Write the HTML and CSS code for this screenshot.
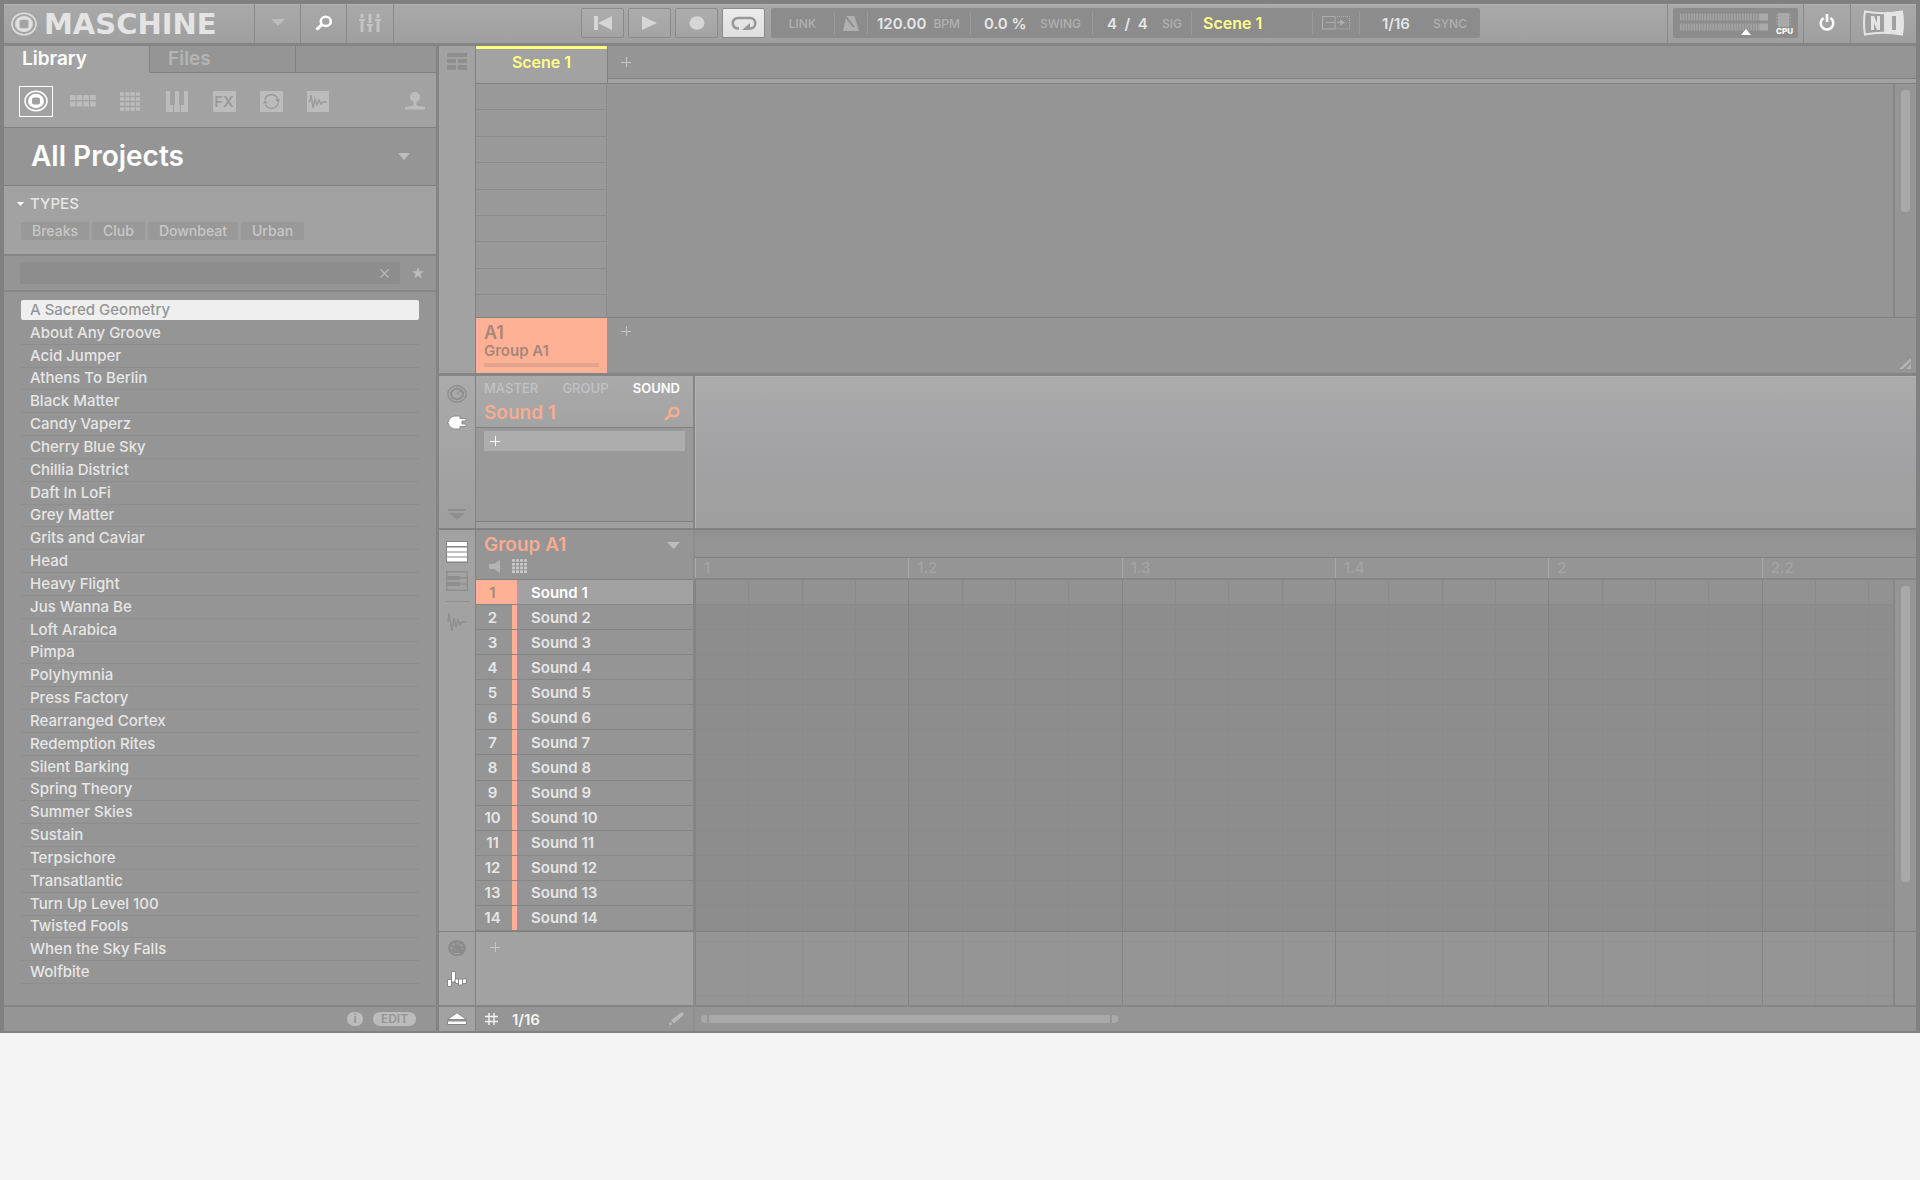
FILE: index.html
```
<!DOCTYPE html>
<html lang="en">

<head>
  <meta charset="utf-8">
  <title>Maschine</title>
  <link rel="stylesheet" href="styles.css">
</head>

<body>
  <div class="app">
    <header class="header">
      <div class="brand">
        <svg width="26" height="24" viewBox="0 0 26 24">
          <ellipse cx="13" cy="12" rx="12" ry="10.8" fill="none" stroke="#dedede" stroke-width="1.6" />
          <ellipse cx="13" cy="12" rx="9" ry="8" fill="#dedede" />
          <rect x="8.500" y="7.800" width="9" height="8.400" rx="2" fill="#a4a4a4" />
        </svg>
        <span>MASCHINE</span>
      </div>
      <button class="head-btn" aria-label="Menu">
        <svg width="14" height="7" viewBox="0 0 14 7"><path d="M0 0h14L7 7z" fill="#bdbdbd" /></svg>
      </button>
      <button class="head-btn" aria-label="Browser">
        <svg width="18" height="16" viewBox="0 0 18 16" fill="none" stroke="#fff">
          <ellipse cx="10.8" cy="6.4" rx="5" ry="4.6" stroke-width="2.6" />
          <path d="M7.2 9.4L1.5 14.6" stroke-width="3" />
        </svg>
      </button>
      <button class="head-btn" aria-label="Mixer">
        <svg width="22" height="18" viewBox="0 0 22 18" fill="#c4c4c4">
          <path d="M1.5 0h3v4h-3zM0 5h6v2H4.500v11h-3V7H0zM9.500 0h3v9h-3zM8 10h6v2h-1.500v6h-3v-6H8zM17.500 0h3v4h-3zM16 5h6v2h-1.500v11h-3V7H16z" />
        </svg>
      </button>

      <div class="transport">
        <button class="play-btn" aria-label="Restart">
          <svg width="18" height="14" viewBox="0 0 18 14"><path d="M0 0h4v14H0zM18 0v14L4 7z" fill="#d6d6d6" /></svg>
        </button>
        <button class="play-btn" aria-label="Play">
          <svg width="15" height="14" viewBox="0 0 15 14"><path d="M0 0l15 7-15 7z" fill="#d6d6d6" /></svg>
        </button>
        <button class="play-btn" aria-label="Record">
          <svg width="16" height="14" viewBox="0 0 16 14"><ellipse cx="8" cy="7" rx="7.500" ry="6.800" fill="#d6d6d6" /></svg>
        </button>
        <button class="play-btn on" aria-label="Loop">
          <svg width="26" height="15" viewBox="0 0 26 15">
            <path d="M8 12.500H7a5.200 5.200 0 0 1 0-10.500h12a5.200 5.200 0 0 1 0 10.500h-2" fill="none" stroke="#999" stroke-width="2.600" />
            <path d="M11 14l8-7v7z" fill="#999" />
          </svg>
        </button>
        <div class="display">
          <div class="cell link"><small>LINK</small></div>
          <div class="cell metro">
            <svg width="16" height="15" viewBox="0 0 16 15">
              <path d="M3.500 0h8L16 15H0z" fill="#b0b0b0" />
              <path d="M3 1l8 10" stroke="#8c8c8c" stroke-width="2" />
              <path d="M4.500 0L11 9" stroke="#b0b0b0" />
            </svg>
          </div>
          <div class="cell bpm"><b>120.00</b><small>BPM</small></div>
          <div class="cell swing"><b>0.0 %</b><small>SWING</small></div>
          <div class="cell sig"><b>4&nbsp; /&nbsp; 4</b><small>SIG</small></div>
          <div class="cell scene-name"><b>Scene 1</b></div>
          <div class="cell follow">
            <svg width="28" height="14" viewBox="0 0 28 14" fill="none" stroke="#aeaeae">
              <path d="M13 .5H.5v12.500H13V.5M4 6.500h8M15 6.500h3" />
              <path d="M15 .5h12.500v12.500H13" stroke-dasharray="1 1" />
              <path d="M18 3.500l5 3-5 3z" fill="#aeaeae" stroke="none" />
            </svg>
          </div>
          <div class="cell sync"><b>1/16</b><small>SYNC</small></div>
        </div>
      </div>

      <div class="meter-box">
        <div class="meter">
          <svg width="112" height="24" viewBox="0 0 112 24">
            <path d="M0 4h80M0 14h80" stroke="#a4a4a4" stroke-width="7" stroke-dasharray="1.700 1" />
            <path d="M80 .5h8v7h-8zM80 10.500h8v7h-8zM98 0h11v14H98z" fill="#a9a9a9" />
            <path d="M96 2h15M96 5h15M96 8h15M96 11h15" stroke="#a9a9a9" />
            <path d="M61 22l5-6 5 6z" fill="#fff" />
          </svg>
          <span>CPU</span>
        </div>
      </div>
      <button class="head-btn power" aria-label="Power">
        <svg width="18" height="18" viewBox="0 0 18 18" fill="none" stroke="#fff" stroke-width="2.600">
          <path d="M5.500 4A6.300 6.300 0 1 0 12.500 4M9 0v8" />
        </svg>
      </button>
      <button class="head-btn ni" aria-label="Native Instruments">
        <svg width="42" height="26" viewBox="0 0 42 26">
          <path d="M2 1.500Q20 5 39 1.500Q41 13 39 24.500Q20 21 2 24.500Q0 13 2 1.500z" fill="#a0a0a0" stroke="#e4e4e4" stroke-width="2" />
          <path d="M21 3.500Q30 3.500 39 1.500Q41 13 39 24.500Q30 22.500 21 22.500z" fill="#e4e4e4" />
          <path d="M8 20V6h3l3 7V6h3v14h-3l-3-7v7z" fill="#e4e4e4" />
          <path d="M29 6h4v14h-4z" fill="#a0a0a0" />
        </svg>
      </button>
    </header>

    <div class="workspace">
      <!-- Browser -->
      <aside class="browser">
        <nav class="tabs">
          <button class="tab active">Library</button>
          <button class="tab">Files</button>
        </nav>
        <div class="kinds">
          <button class="kind active" aria-label="Projects">
            <svg width="24" height="22" viewBox="0 0 24 22">
              <ellipse cx="12" cy="11" rx="11" ry="9.800" fill="none" stroke="#fff" stroke-width="1.500" />
              <ellipse cx="12" cy="11" rx="8" ry="7.200" fill="#fff" />
              <rect x="8" y="7.500" width="8" height="7" rx="2" fill="#a2a2a2" />
            </svg>
          </button>
          <button class="kind" aria-label="Groups">
            <svg width="26" height="12" viewBox="0 0 26 12" fill="none" stroke="#bcbcbc" stroke-width="5">
              <path d="M0 2.500h26M0 9h26" stroke-dasharray="5.600 1.100" />
            </svg>
          </button>
          <button class="kind" aria-label="Sounds">
            <svg width="20" height="19" viewBox="0 0 20 19" fill="none" stroke="#bcbcbc" stroke-width="3.700">
              <path d="M0 2h20M0 7h20M0 12h20M0 17h20" stroke-dasharray="4.200 1.100" />
            </svg>
          </button>
          <button class="kind" aria-label="Instruments">
            <svg width="22" height="21" viewBox="0 0 22 21" fill="#bcbcbc">
              <path d="M0 0h4v14h3v7H0zM8 14h1V0h4v14h1v7H8zM18 0h4v21h-7v-7h3z" />
            </svg>
          </button>
          <button class="kind" aria-label="Effects">
            <span class="fx">FX</span>
          </button>
          <button class="kind" aria-label="Loops">
            <svg width="23" height="21" viewBox="0 0 23 21" fill="none" stroke="#9a9a9a" stroke-width="1.400">
              <path d="M0 0h23v21H0z" fill="#bcbcbc" stroke="none" />
              <path d="M5 9a6.500 6 0 0 1 12.500-1.500M18 12a6.500 6 0 0 1-12.500 1.500" />
              <path d="M15 8h5l-1.500 4zM8 12.500H3L5 9z" fill="#9a9a9a" stroke="none" />
            </svg>
          </button>
          <button class="kind" aria-label="One-shots">
            <svg width="22" height="21" viewBox="0 0 22 21" fill="none" stroke="#9a9a9a" stroke-width="1.400">
              <path d="M0 0h22v21H0z" fill="#bcbcbc" stroke="none" />
              <path d="M2 11l1-1 1-6 2 13 2-9 2 6 2-5 2 4 2-2h4" />
            </svg>
          </button>
          <button class="kind user" aria-label="User content">
            <svg width="20" height="18" viewBox="0 0 20 18" fill="#bcbcbc">
              <ellipse cx="10" cy="5" rx="5" ry="5" />
              <path d="M8.500 9h3v4.500l8.500 1.500v2.500H0V15l8.500-1.500z" />
            </svg>
          </button>
        </div>
        <button class="project">
          <span>All Projects</span>
          <svg width="12" height="7" viewBox="0 0 12 7"><path d="M0 0h12L6 7z" fill="#bdbdbd" /></svg>
        </button>
        <section class="types">
          <h2><svg width="7" height="4" viewBox="0 0 7 4"><path d="M0 0h7L3.500 4z" fill="#fff" /></svg>TYPES</h2>
          <div class="tags">
            <button>Breaks</button>
            <button>Club</button>
            <button>Downbeat</button>
            <button>Urban</button>
          </div>
        </section>
        <div class="search">
          <div class="search-box">
            <input type="text" aria-label="Search">
            <button aria-label="Clear search">
              <svg width="9" height="9" viewBox="0 0 9 9"><path d="M.5.5l8 8M8.500.5l-8 8" stroke="#b8b8b8" stroke-width="1.300" /></svg>
            </button>
          </div>
          <button aria-label="Favorites">
            <svg width="12" height="12" viewBox="0 0 12 12"><path d="M6 0l1.400 4.200H12L8.300 7l1.400 4.600L6 8.800l-3.700 2.800L3.700 7 0 4.200h4.600z" fill="#bdbdbd" /></svg>
          </button>
        </div>
        <ul class="results">
          <li class="selected">A Sacred Geometry</li>
          <li>About Any Groove</li>
          <li>Acid Jumper</li>
          <li>Athens To Berlin</li>
          <li>Black Matter</li>
          <li>Candy Vaperz</li>
          <li>Cherry Blue Sky</li>
          <li>Chillia District</li>
          <li>Daft In LoFi</li>
          <li>Grey Matter</li>
          <li>Grits and Caviar</li>
          <li>Head</li>
          <li>Heavy Flight</li>
          <li>Jus Wanna Be</li>
          <li>Loft Arabica</li>
          <li>Pimpa</li>
          <li>Polyhymnia</li>
          <li>Press Factory</li>
          <li>Rearranged Cortex</li>
          <li>Redemption Rites</li>
          <li>Silent Barking</li>
          <li>Spring Theory</li>
          <li>Summer Skies</li>
          <li>Sustain</li>
          <li>Terpsichore</li>
          <li>Transatlantic</li>
          <li>Turn Up Level 100</li>
          <li>Twisted Fools</li>
          <li>When the Sky Falls</li>
          <li>Wolfbite</li>
        </ul>
        <footer class="browser-foot">
          <button class="info">i</button>
          <button class="edit">EDIT</button>
        </footer>
      </aside>

      <main class="main">
        <!-- Arranger -->
        <section class="arranger">
          <div class="rail">
            <button aria-label="Arranger view">
              <svg width="20" height="17" viewBox="0 0 20 17" fill="#8e8e8e"><path d="M0 0h20v4H0zM0 6h9v4H0zM11 6h9v4h-9zM0 12h9v5H0zM11 12h9v5h-9z" /></svg>
            </button>
          </div>
          <button class="scene-tab">Scene 1</button>
          <div class="scene-bar"><button class="plus" aria-label="Add scene"></button></div>
          <div class="clips">
            <div></div><div></div><div></div><div></div><div></div><div></div><div></div><div></div><div></div>
          </div>
          <div class="canvas"></div>
          <div class="vscroll"><span class="short"></span></div>
          <button class="group">
            <b>A1</b>
            <span>Group A1</span>
            <i></i>
          </button>
          <div class="group-bar">
            <button class="plus" aria-label="Add group"></button>
            <svg width="13" height="11" viewBox="0 0 13 11"><path d="M12 0v3L4 11H0zM12 6v5H7z" fill="#b4b4b4" /></svg>
          </div>
        </section>

        <!-- Control area -->
        <section class="control">
          <div class="rail">
            <button aria-label="Channel">
              <svg width="20" height="18" viewBox="0 0 20 18" fill="none" stroke="#8e8e8e">
                <ellipse cx="10" cy="9" rx="9.200" ry="8.200" stroke-width="1.400" />
                <ellipse cx="10" cy="9" rx="6" ry="5.300" stroke-width="2" />
                <path d="M10 9l4-4" stroke-width="1.500" />
              </svg>
            </button>
            <button aria-label="Plug-in">
              <svg width="20" height="15" viewBox="0 0 20 15"><path d="M.5 7h1C2 3 5 1 9 1h4v2.500h6v2.500h-4v3h4v2.500h-6V14H9C5 14 2 12 1.500 8.500h-1z" fill="#fff" stroke="#8b8b8b" /></svg>
            </button>
            <button class="last" aria-label="Collapse">
              <svg width="18" height="11" viewBox="0 0 18 11" fill="#8e8e8e"><path d="M0 0h18v2H0zM1 4h16l-8 7z" /></svg>
            </button>
          </div>
          <div class="plugin">
            <div class="plugin-head">
              <div class="levels">
                <button>MASTER</button>
                <button>GROUP</button>
                <button class="active">SOUND</button>
              </div>
              <div class="plugin-title">
                <span>Sound 1</span>
                <svg width="16" height="15" viewBox="0 0 16 15" fill="none" stroke="#f7ac92">
                  <ellipse cx="10" cy="6" rx="4.500" ry="4.200" stroke-width="2.600" />
                  <path d="M6.800 8.800L1 14" stroke-width="2.800" />
                </svg>
              </div>
            </div>
            <div class="slots"><button class="slot" aria-label="Add plug-in"><span class="plus white"></span></button></div>
            <div class="plugin-foot"></div>
          </div>
          <div class="params"></div>
        </section>

        <!-- Pattern editor -->
        <section class="editor">
          <div class="rail rail-views">
            <button aria-label="Group view">
              <svg width="22" height="22" viewBox="0 0 22 22"><path d="M0 0h22v22H0z" fill="#868686" /><path d="M1 1h20v4H1zM1 6.500h20v4H1zM1 11.500h20v4H1zM1 16.500h20v4H1z" fill="#fff" /></svg>
            </button>
            <button aria-label="Keyboard view">
              <svg width="22" height="20" viewBox="0 0 22 20" fill="none" stroke="#8e8e8e" stroke-width="1.400">
                <path d="M.7.7h20.600v18.600H.7zM1 7h20M1 13h20" />
                <path d="M1 5h13v4H1zM1 11h13v4H1z" fill="#8e8e8e" stroke="none" />
              </svg>
            </button>
            <hr>
            <button aria-label="Sampler">
              <svg width="20" height="20" viewBox="0 0 20 20" fill="none" stroke="#8f8f8f" stroke-width="1.500"><path d="M1 10L2 1l3 18 2-13 2 9 2-7 2 5 2-3h5" /></svg>
            </button>
          </div>
          <div class="rail rail-lanes">
            <button aria-label="MIDI">
              <svg width="18" height="16" viewBox="0 0 18 16"><ellipse cx="9" cy="8" rx="9" ry="8" fill="#8c8c8c" /><path d="M6 13.500h6" stroke="#a2a2a2" /><path d="M3.500 9A5.500 5.500 0 0 1 14.500 9" fill="none" stroke="#a2a2a2" stroke-width="2" stroke-dasharray="2 2" /></svg>
            </button>
            <button aria-label="Automation">
              <svg width="20" height="16" viewBox="0 0 20 16"><path d="M.5 15.500V8.500h4V.5h4V8h11v4.500h-4V14h-4v-1.500h-3V11h-4v4.500z" fill="#fff" stroke="#868686" /><path d="M8 8v4M11.500 8v5M15.500 8v5M4.500 8v4" stroke="#868686" /></svg>
            </button>
          </div>
          <div class="rail rail-foot">
            <button aria-label="Expand">
              <svg width="20" height="13" viewBox="0 0 20 13"><path d="M.5 7.500h19L10 .7zM.5 9h19v3.500H.5z" fill="#fff" stroke="#868686" /></svg>
            </button>
          </div>

          <div class="pattern-head">
            <div class="pattern-title">
              <span>Group A1</span>
              <svg width="13" height="7" viewBox="0 0 13 7"><path d="M0 0h13L6.500 7z" fill="#bdbdbd" /></svg>
            </div>
            <div class="pattern-tools">
              <svg width="11" height="13" viewBox="0 0 11 13"><path d="M0 4h5l6-4v13L5 9H0z" fill="#b4b4b4" /></svg>
              <svg width="15" height="14" viewBox="0 0 15 14" fill="none" stroke="#c8c8c8" stroke-width="2.600"><path d="M0 1.500h15M0 5.200h15M0 8.900h15M0 12.600h15" stroke-dasharray="3 1" /></svg>
            </div>
          </div>
          <div class="timeline">
            <div class="ruler">
              <span>1</span><span>1.2</span><span>1.3</span><span>1.4</span><span>2</span><span>2.2</span>
            </div>
          </div>

          <ol class="sounds">
            <li class="active"><b>1</b><span>Sound 1</span></li>
            <li><b>2</b><span>Sound 2</span></li>
            <li><b>3</b><span>Sound 3</span></li>
            <li><b>4</b><span>Sound 4</span></li>
            <li><b>5</b><span>Sound 5</span></li>
            <li><b>6</b><span>Sound 6</span></li>
            <li><b>7</b><span>Sound 7</span></li>
            <li><b>8</b><span>Sound 8</span></li>
            <li><b>9</b><span>Sound 9</span></li>
            <li><b>10</b><span>Sound 10</span></li>
            <li><b>11</b><span>Sound 11</span></li>
            <li><b>12</b><span>Sound 12</span></li>
            <li><b>13</b><span>Sound 13</span></li>
            <li><b>14</b><span>Sound 14</span></li>
          </ol>
          <div class="notes">
            <div class="lanes">
              <i></i><i></i><i></i><i></i><i></i><i></i><i></i><i></i><i></i><i></i><i></i><i></i><i></i><i></i>
            </div>
            <div class="steps">
              <i></i><i></i><i></i><i></i><i></i><i></i><i></i><i></i><i></i><i></i><i></i><i></i>
              <i></i><i></i><i></i><i></i><i></i><i></i><i></i><i></i><i></i><i></i><i></i>
            </div>
          </div>
          <div class="vscroll"><span class="long"></span></div>

          <div class="lane-list"><button class="plus" aria-label="Add lane"></button></div>
          <div class="automation">
            <div class="range"></div>
            <div class="steps">
              <i></i><i></i><i></i><i></i><i></i><i></i><i></i><i></i><i></i><i></i><i></i><i></i>
              <i></i><i></i><i></i><i></i><i></i><i></i><i></i><i></i><i></i><i></i><i></i>
            </div>
          </div>
          <div class="vscroll lower"></div>

          <div class="grid-foot">
            <svg width="13" height="12" viewBox="0 0 13 12"><path d="M4 0v12M9 0v12M0 3.500h13M0 8.500h13" stroke="#f4f4f4" stroke-width="1.400" /></svg>
            <span>1/16</span>
            <svg class="pencil" width="16" height="14" viewBox="0 0 16 14"><path d="M0 13.500l1-4 2.500 3zM2 8.500L12.500 0 15.500 2 5 11.500z" fill="#b8b8b8" /></svg>
          </div>
          <div class="hscroll"><i class="left"></i><span></span><i class="right"></i></div>
        </section>
      </main>
    </div>
  </div>
</body>

</html>
```
FILE: styles.css
```
* {
  box-sizing: border-box;
}

body {
  margin: 0;
  background: #f4f4f4;
  font-family: Inter, "Liberation Sans", Arial, sans-serif;
  font-size: 15px;
  font-weight: 500;
  color: #e6e6e6;
}

button {
  margin: 0;
  padding: 0;
  border: none;
  background: none;
  font: inherit;
  color: inherit;
  cursor: pointer;
}

svg {
  display: block;
  flex: none;
}

b {
  font-weight: 600;
}

.app {
  display: flex;
  flex-direction: column;
  height: calc(100vh - 147px);
  min-height: 900px;
  min-width: 1500px;
  border: 4px solid #818181;
  border-bottom-width: 2px;
  background: #959595;
}

/* Header */
.header {
  display: flex;
  flex: none;
  height: 42px;
  border-bottom: 3px solid #858585;
  background: linear-gradient(#a9a9a9, #9f9f9f);
  box-shadow: inset 0 1px #b0b0b0;
}

.brand {
  display: flex;
  align-items: center;
  gap: 7px;
  width: 250px;
  padding-left: 7px;
  font-family: "DejaVu Sans", Verdana, sans-serif;
  font-size: 29px;
  line-height: 38px;
  font-weight: 700;
  color: #e4e4e4;
}

.head-btn {
  display: flex;
  align-items: center;
  justify-content: center;
  width: 46px;
  padding-bottom: 2px;
  border-left: 1px solid #8a8a8a;
}

.head-btn:nth-of-type(3) {
  width: 48px;
  border-right: 1px solid #8a8a8a;
}

.transport {
  display: flex;
  gap: 4px;
  margin: 4px auto 5px;
}

.play-btn {
  display: flex;
  align-items: center;
  justify-content: center;
  width: 43px;
  border: 1px solid #8b8b8b;
  border-radius: 2px;
  background: linear-gradient(#adadad, #a3a3a3);
}

.play-btn.on {
  background: linear-gradient(#ececec, #dedede);
}

.display {
  display: flex;
  margin-left: 2px;
  padding: 3px 0;
  border-radius: 2px;
  background: #8c8c8c;
}

.cell {
  display: flex;
  align-items: center;
  justify-content: space-between;
  border-left: 1px solid #999;
  white-space: nowrap;
}

.cell small {
  font-size: 12px;
  color: #b0b0b0;
}

.link {
  width: 63px;
  justify-content: center;
  border-left: none;
}

.metro {
  width: 33px;
  justify-content: center;
}

.bpm {
  width: 103px;
  padding: 0 10px 0 9px;
}

.swing {
  width: 122px;
  padding: 0 11px 0 13px;
}

.sig {
  width: 99px;
  padding: 0 9px 0 14px;
}

.scene-name {
  width: 121px;
  padding-left: 11px;
  font-size: 16px;
  color: #ffff8c;
}

.follow {
  width: 47px;
  justify-content: center;
}

.sync {
  width: 121px;
  padding: 0 13px 0 22px;
}

.meter-box {
  width: 136px;
  padding: 4px 5px 5px;
  border-left: 1px solid #8a8a8a;
}

.meter {
  position: relative;
  height: 30px;
  padding: 5px 7px;
  border-radius: 2px;
  background: #8c8c8c;
}

.meter span {
  position: absolute;
  right: 5px;
  bottom: 3px;
  font-size: 8px;
  line-height: 8px;
  font-weight: 800;
  color: #fff;
}

.head-btn.power {
  width: 47px;
}

.head-btn.ni {
  width: 66px;
}

/* Browser */
.workspace {
  display: flex;
  flex: 1;
  min-height: 0;
}

.browser {
  display: flex;
  flex-direction: column;
  flex: none;
  width: 435px;
  border-right: 3px solid #848484;
  background: #959595;
}

.tabs {
  display: flex;
  flex: none;
  height: 27px;
}

.tabs::after {
  content: "";
  flex: 1;
  border-bottom: 1px solid #818181;
}

.tab {
  width: 146px;
  padding-left: 18px;
  border-right: 1px solid #818181;
  border-bottom: 1px solid #818181;
  text-align: left;
  font-size: 19px;
  line-height: 24px;
  font-weight: 600;
  color: #b4b4b4;
}

.tab.active {
  border-bottom-color: #a2a2a2;
  background: #a2a2a2;
  color: #fff;
}

.kinds {
  display: flex;
  align-items: center;
  gap: 13px;
  flex: none;
  height: 55px;
  padding: 2px 11px 0 15px;
  border-bottom: 1px solid #818181;
  background: #a2a2a2;
}

.kind {
  display: flex;
  align-items: center;
  justify-content: center;
  width: 34px;
  height: 31px;
}

.kind.active {
  border: 1px solid #fff;
}

.kind.user {
  width: 20px;
  margin-left: auto;
}

.fx {
  width: 23px;
  background: #bcbcbc;
  font-size: 15px;
  line-height: 21px;
  font-weight: 600;
  color: #9a9a9a;
}

.project {
  display: flex;
  align-items: center;
  justify-content: space-between;
  flex: none;
  height: 58px;
  padding: 0 26px 1px 27px;
  border-bottom: 1px solid #818181;
  font-size: 28px;
  line-height: 34px;
  font-weight: 600;
  color: #fff;
}

.types {
  flex: none;
  height: 70px;
  padding: 9px 17px 0;
  border-bottom: 2px solid #868686;
  background: #a2a2a2;
}

.types h2 {
  display: flex;
  align-items: center;
  gap: 6px;
  margin: 0 0 10px -4px;
  font-size: 15px;
  line-height: 17px;
  font-weight: 500;
}

.tags {
  display: flex;
  gap: 3px;
}

.tags button {
  padding: 0 11px;
  border-radius: 2px;
  background: #999;
  font-size: 14px;
  line-height: 18px;
  color: #c8c8c8;
}

.search {
  display: flex;
  align-items: center;
  justify-content: space-between;
  flex: none;
  height: 36px;
  padding: 0 12px 0 16px;
  border-bottom: 2px solid #868686;
}

.search-box {
  display: flex;
  align-items: center;
  width: 380px;
  height: 22px;
  padding-right: 11px;
  border-radius: 2px;
  background: #8d8d8d;
}

.search-box input {
  flex: 1;
  padding: 0 10px;
  border: none;
  outline: none;
  background: none;
  font: inherit;
  color: #e6e6e6;
}

.results {
  display: grid;
  grid-auto-rows: 1fr;
  flex: 1;
  min-height: 0;
  margin: 0;
  padding: 7px 17px 21px 17px;
  list-style: none;
}

.results li {
  display: flex;
  align-items: center;
  padding-left: 9px;
  border-bottom: 1px solid #8e8e8e;
  line-height: 18px;
}

.results .selected {
  margin: 1px 0 2px;
  border: none;
  border-radius: 2px;
  background: #efefef;
  color: #959595;
}

.browser-foot {
  display: flex;
  align-items: center;
  justify-content: flex-end;
  gap: 10px;
  flex: none;
  height: 26px;
  padding: 0 20px 1px 0;
  border-top: 2px solid #868686;
}

.browser-foot button {
  border-radius: 7px;
  background: #bcbcbc;
  font-size: 12px;
  line-height: 14px;
  font-weight: 600;
  color: #959595;
}

.browser-foot .info {
  width: 16px;
}

.browser-foot .edit {
  width: 43px;
}

/* Shared pieces of the main area */
.main {
  display: flex;
  flex-direction: column;
  flex: 1;
  min-width: 0;
}

.rail {
  display: flex;
  flex-direction: column;
  align-items: center;
  border-right: 1px solid #818181;
  background: #a2a2a2;
}

.plus {
  display: block;
  width: 10px;
  height: 10px;
  background:
    linear-gradient(#c6c6c6, #c6c6c6) center / 10px 1px no-repeat,
    linear-gradient(#c6c6c6, #c6c6c6) center / 1px 10px no-repeat;
}

.plus.white {
  background:
    linear-gradient(#fff, #fff) center / 10px 1px no-repeat,
    linear-gradient(#fff, #fff) center / 1px 10px no-repeat;
}

.vscroll {
  padding: 6px 6px 5px;
  border-left: 2px solid #868686;
}

.vscroll span {
  display: block;
  width: 9px;
  border-radius: 4px;
  background: #a9a9a9;
}

.vscroll .short {
  height: 55%;
}

.vscroll .long {
  height: 87%;
}

/* Arranger */
.arranger {
  display: grid;
  grid-template-columns: 37px 131px 1fr 23px;
  grid-template-rows: 38px 234px 1fr;
  flex: none;
  height: 330px;
  border-bottom: 3px solid #858585;
}

.arranger .rail {
  grid-row: 1 / 4;
  padding-top: 7px;
}

.scene-tab {
  padding-bottom: 8px;
  border-top: 3px solid #ffff80;
  border-bottom: 1px solid #818181;
  background: #a2a2a2;
  font-size: 16px;
  line-height: 20px;
  font-weight: 600;
  color: #ffff8c;
}

.scene-bar {
  grid-column: 3 / 5;
  padding: 11px 13px;
  border-left: 1px solid #818181;
  border-bottom: 1px solid #818181;
  background: linear-gradient(#959595 32px, #818181 32px, #818181 33px, #a2a2a2 33px);
}

.clips {
  display: grid;
  grid-template-rows: repeat(8, 1fr) 22px;
  border-right: 1px solid #8d8d8d;
  border-bottom: 1px solid #818181;
  background: #999;
}

.clips div {
  border-bottom: 1px solid #8b8b8b;
}

.clips div:last-child {
  border-bottom: none;
}

.canvas {
  border-bottom: 1px solid #818181;
}

.arranger .vscroll {
  border-bottom: 1px solid #818181;
}

.group {
  display: flex;
  flex-direction: column;
  padding: 6px 8px;
  background: #ffb195;
  text-align: left;
  font-weight: 600;
  color: #a68779;
}

.group b {
  font-size: 18px;
  line-height: 18px;
}

.group span {
  line-height: 17px;
}

.group i {
  width: 100%;
  height: 4px;
  margin-top: 4px;
  background: #e2a48e;
}

.group-bar {
  display: flex;
  justify-content: space-between;
  grid-column: 3 / 5;
  padding: 8px 4px 4px 14px;
}

.group-bar svg {
  align-self: flex-end;
}

/* Control area */
.control {
  display: grid;
  grid-template-columns: 37px 219px 1fr;
  flex: none;
  height: 154px;
  border-bottom: 2px solid #818181;
}

.control .rail {
  gap: 12px;
  padding: 9px 0 8px;
  background: linear-gradient(#aaa, #9e9e9e);
}

.control .rail .last {
  margin-top: auto;
}

.plugin {
  display: flex;
  flex-direction: column;
  border-right: 2px solid #868686;
  background: #999;
}

.plugin-head {
  height: 52px;
  padding: 4px 13px 0 8px;
  border-bottom: 1px solid #818181;
  background: linear-gradient(#aaa, #a3a3a3);
}

.levels {
  display: flex;
  justify-content: space-between;
  font-size: 13px;
  line-height: 17px;
  color: #c2c2c2;
}

.levels .active {
  font-weight: 600;
  color: #fff;
}

.plugin-title,
.pattern-title {
  display: flex;
  align-items: center;
  justify-content: space-between;
  font-size: 19px;
  line-height: 22px;
  font-weight: 600;
  color: #f7ac92;
}

.plugin-title {
  margin-top: 5px;
}

.slots {
  flex: 1;
  padding: 3px 8px 0 8px;
}

.slot {
  width: 100%;
  height: 20px;
  padding-left: 6px;
  border-radius: 1px;
  background: #adadad;
}

.plugin-foot {
  height: 7px;
  border-top: 1px solid #818181;
  background: #9f9f9f;
}

.params {
  background: linear-gradient(#ababab, #a4a4a7 40%, #9e9e9e);
  box-shadow: inset 1px 1px #b2b2b2;
}

/* Pattern editor */
.editor {
  display: grid;
  grid-template-columns: 37px 219px 1fr 23px;
  grid-template-rows: 50px 1fr 74px 26px;
  flex: 1;
  min-height: 0;
}

.rail-views {
  grid-column: 1;
  grid-row: 1 / 3;
  gap: 8px;
  padding-top: 11px;
}

.rail-views hr {
  width: 24px;
  margin: 2px 0;
  border: none;
  border-top: 1px solid #8f8f8f;
}

.rail-lanes {
  grid-column: 1;
  grid-row: 3;
  gap: 15px;
  padding-top: 8px;
  border-top: 1px solid #818181;
}

.rail-foot {
  grid-column: 1;
  grid-row: 4;
  padding-top: 5px;
  border-top: 2px solid #868686;
}

.pattern-head {
  grid-column: 2;
  grid-row: 1;
  padding: 4px 13px 0 8px;
  border-right: 2px solid #8e8e8e;
  border-bottom: 1px solid #818181;
}

.pattern-tools {
  display: flex;
  align-items: center;
  gap: 12px;
  padding: 3px 5px;
}

.timeline {
  grid-column: 3 / 5;
  grid-row: 1;
  padding-top: 27px;
  border-bottom: 2px solid #868686;
  background: linear-gradient(#8f8f8f, #959595 12px);
}

.ruler {
  display: grid;
  grid-template-columns: repeat(5, 13fr) 8fr;
  height: 21px;
  padding-right: 23px;
  border-top: 1px solid #818181;
}

.ruler span {
  padding-left: 8px;
  border-left: 1px solid #a9a9a9;
  line-height: 20px;
  color: #a4a4a4;
}

.sounds {
  display: grid;
  grid-auto-rows: 1fr;
  margin: 0;
  padding: 0;
  border-right: 2px solid #868686;
  list-style: none;
}

.sounds li {
  display: flex;
  align-items: stretch;
  border-bottom: 1px solid #858585;
  font-weight: 600;
}

.sounds b,
.sounds span {
  display: flex;
  align-items: center;
}

.sounds b {
  justify-content: center;
  width: 41px;
  padding-right: 3px;
  border-right: 5px solid #ffb195;
}

.sounds span {
  flex: 1;
  padding-left: 14px;
}

.sounds .active b {
  background: #ffb195;
  color: #a68779;
}

.sounds .active span {
  background: #a2a2a2;
  color: #fff;
}

/* Note lanes and step columns share one cell */
.notes,
.automation {
  display: grid;
  min-height: 0;
}

.notes > div,
.automation > div {
  grid-area: 1 / 1;
}

.notes {
  background: #8d8d8d;
}

.lanes {
  display: grid;
  grid-auto-rows: 1fr;
}

.lanes i {
  border-bottom: 1px solid #8a8a8a;
}

.lanes i:first-child {
  background: #929292;
}

.steps {
  display: grid;
  grid-template-columns: repeat(22, 13fr) 6fr;
}

.steps i {
  border-left: 1px solid #8a8a8a;
}

.steps i:nth-child(4n + 1) {
  border-left-color: #838383;
}

.lane-list {
  grid-column: 2;
  padding: 10px 14px;
  border-top: 1px solid #818181;
  border-right: 2px solid #8e8e8e;
  background: #a2a2a2;
}

.automation {
  border-top: 1px solid #818181;
}

.automation .range {
  margin: 9px 0;
  border-top: 1px solid #919191;
  border-bottom: 1px solid #919191;
}

.automation .steps i {
  border-left-color: #919191;
}

.automation .steps i:nth-child(4n + 1) {
  border-left-color: #848484;
}

.vscroll.lower {
  border-top: 1px solid #818181;
}

.grid-foot {
  grid-column: 2;
  display: flex;
  align-items: center;
  gap: 14px;
  padding: 0 8px 0 9px;
  border-top: 2px solid #868686;
  border-right: 2px solid #8e8e8e;
  font-weight: 600;
  color: #f4f4f4;
}

.grid-foot .pencil {
  margin-left: auto;
}

.hscroll {
  grid-column: 3 / 5;
  display: flex;
  align-items: center;
  gap: 2px;
  padding-left: 6px;
  border-top: 2px solid #868686;
}

.hscroll i,
.hscroll span {
  height: 8px;
  background: #a9a9a9;
}

.hscroll i {
  width: 6px;
}

.hscroll .left {
  border-radius: 4px 0 0 4px;
}

.hscroll .right {
  border-radius: 0 4px 4px 0;
}

.hscroll span {
  width: 33%;
}
```
